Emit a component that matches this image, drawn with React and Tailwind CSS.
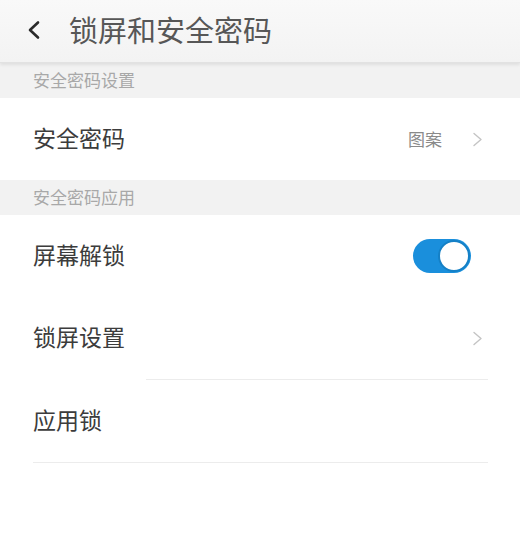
import React from "react";

const font = { fontFamily: '"Noto Sans CJK SC", "Noto Sans", sans-serif' };

function Chevron() {
  return (
    <svg width="12" height="15" viewBox="0 0 12 15" className="shrink-0">
      <path d="M2 1.5 L9 7.5 L2 13.5" fill="none" stroke="#c4c4c4" strokeWidth="1.4" strokeLinecap="round" strokeLinejoin="round" />
    </svg>
  );
}

function Section({ children }) {
  return (
    <div className="h-[35px] bg-[#f2f2f2] flex items-center pl-[33px] text-[17px] text-[#a8a8a8] leading-none">
      <span className="mt-[-3px]">{children}</span>
    </div>
  );
}

function Row({ label, right }) {
  return (
    <div className="h-[82px] flex items-center justify-between pl-[33px] pr-[36px]">
      <span className="text-[23px] text-[#3c3c3c] leading-none mt-[-3px]">{label}</span>
      {right}
    </div>
  );
}

export default function App() {
  return (
    <div className="w-[520px] h-[543px] bg-white overflow-hidden" style={font}>
      <div className="relative h-[63px] bg-gradient-to-b from-[#f9f9f9] to-[#f3f3f3] flex items-center shadow-[0_2px_3px_rgba(0,0,0,0.08)] border-b border-[#e2e2e2] z-10">
        <svg width="16" height="20" viewBox="0 0 16 20" className="ml-[26px] mt-[-2px]">
          <path d="M12 2.5 L4 10 L12 17.5" fill="none" stroke="#2a2a2a" strokeWidth="2.6" strokeLinecap="round" strokeLinejoin="round" />
        </svg>
        <span className="ml-[27px] text-[29px] text-[#575757] leading-none mt-[-4px]">锁屏和安全密码</span>
      </div>
      <Section>安全密码设置</Section>
      <Row
        label="安全密码"
        right={
          <div className="flex items-center gap-[30px]">
            <span className="text-[17px] text-[#8a8a8a] leading-none mt-[-1px]">图案</span>
            <Chevron />
          </div>
        }
      />
      <Section>安全密码应用</Section>
      <Row
        label="屏幕解锁"
        right={
          <div className="relative w-[58px] h-[34px] rounded-full bg-[#1a8fdc] mr-[13px]">
            <div className="absolute right-[1px] top-[1px] w-[32px] h-[32px] rounded-full bg-white border-[2px] border-[#1580c6]" />
          </div>
        }
      />
      <Row label="锁屏设置" right={<Chevron />} />
      <div className="ml-[146px] mr-[32px] h-px bg-[#ececec]" />
      <Row label="应用锁" right={null} />
      <div className="ml-[33px] mr-[32px] h-px bg-[#ececec]" />
    </div>
  );
}
